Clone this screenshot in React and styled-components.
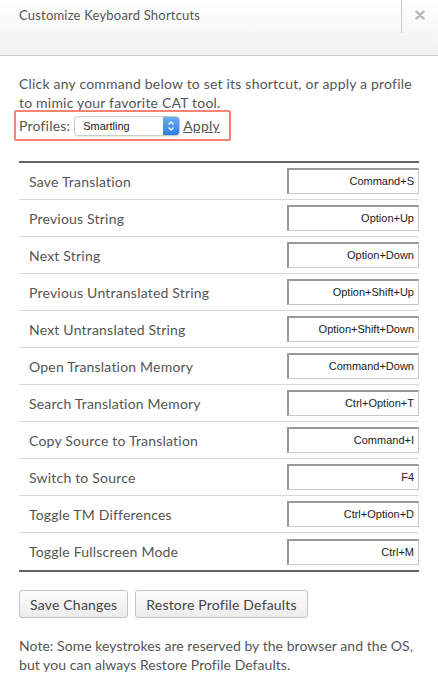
import React from 'react';
import styled, { createGlobalStyle } from 'styled-components';

const GlobalStyle = createGlobalStyle`
  html, body {
    margin: 0;
    padding: 0;
    background: #ffffff;
  }
  body {
    font-family: Lato, 'Liberation Sans', sans-serif;
    letter-spacing: 0.2px;
    color: #555;
  }
`;

const SHORTCUTS = [
  ['Save Translation', 'Command+S'],
  ['Previous String', 'Option+Up'],
  ['Next String', 'Option+Down'],
  ['Previous Untranslated String', 'Option+Shift+Up'],
  ['Next Untranslated String', 'Option+Shift+Down'],
  ['Open Translation Memory', 'Command+Down'],
  ['Search Translation Memory', 'Ctrl+Option+T'],
  ['Copy Source to Translation', 'Command+I'],
  ['Switch to Source', 'F4'],
  ['Toggle TM Differences', 'Ctrl+Option+D'],
  ['Toggle Fullscreen Mode', 'Ctrl+M'],
];

function App() {
  return (
    <>
      <GlobalStyle />
      <Dialog>
        <Header>
          <Title>Customize Keyboard Shortcuts</Title>
          <CloseButton>
            <svg width="10" height="10" viewBox="0 0 10 10">
              <path d="M1.5 1.5 L8.5 8.5 M8.5 1.5 L1.5 8.5" stroke="#b5b5b5" strokeWidth="2.4" strokeLinecap="round" />
            </svg>
          </CloseButton>
        </Header>

        <Body>
          <Intro>
            Click any command below to set its shortcut, or apply a profile
            to mimic your favorite CAT tool.
          </Intro>

          <ProfileBox>
            <ProfileLabel>Profiles:</ProfileLabel>
            <SelectBox>
              <SelectText>Smartling</SelectText>
              <SelectArrow>
                <svg width="8" height="12" viewBox="0 0 8 12">
                  <path d="M1.5 4.5 L4 2 L6.5 4.5 M1.5 7.5 L4 10 L6.5 7.5" stroke="#fff" strokeWidth="1.3" fill="none" />
                </svg>
              </SelectArrow>
            </SelectBox>
            <ApplyLink>Apply</ApplyLink>
          </ProfileBox>

          <ShortcutTable>
            {SHORTCUTS.map(([label, keys], i) => (
              <ShortcutRow key={label} $last={i === SHORTCUTS.length - 1}>
                <CommandName>{label}</CommandName>
                <KeyInput>{keys}</KeyInput>
              </ShortcutRow>
            ))}
          </ShortcutTable>

          <ButtonRow>
            <Button>Save Changes</Button>
            <Button>Restore Profile Defaults</Button>
          </ButtonRow>

          <Note>
            Note: Some keystrokes are reserved by the browser and the OS,
            but you can always Restore Profile Defaults.
          </Note>
        </Body>
      </Dialog>
    </>
  );
}

export default App;

const Dialog = styled.div`
  width: 438px;
  height: 698px;
  background: #fff;
  overflow: hidden;
`;

const Header = styled.div`
  height: 56px;
  display: flex;
  align-items: flex-start;
  justify-content: space-between;
  background: linear-gradient(to bottom, #ffffff 0%, #f1f1f1 100%);
  border-bottom: 1px solid #cfcfcf;
  box-sizing: border-box;
`;

const Title = styled.div`
  padding: 6px 0 0 19px;
  font-size: 13px;
  line-height: 18px;
  color: #555;
`;

const CloseButton = styled.div`
  width: 37px;
  height: 33px;
  border-left: 1px solid #c8c8c8;
  display: flex;
  align-items: center;
  justify-content: center;
  padding-bottom: 4px;
  box-sizing: border-box;
`;

const Body = styled.div`
  padding: 18px 19px 0 19px;
`;

const Intro = styled.p`
  margin: 0;
  font-size: 14px;
  line-height: 19px;
  color: #555;
`;

const ProfileBox = styled.div`
  display: flex;
  width: fit-content;
  align-items: center;
  margin: -2px 0 0 -5px;
  padding: 0 9px 0 3px;
  height: 31px;
  border: 2px solid #f58373;
  border-radius: 2px;
  box-sizing: border-box;
`;

const ProfileLabel = styled.span`
  font-size: 14px;
  color: #555;
  margin-right: 4px;
`;

const SelectBox = styled.div`
  display: flex;
  align-items: stretch;
  width: 106px;
  height: 20px;
  border: 1px solid #c9c9c9;
  border-radius: 4px;
  overflow: hidden;
  box-sizing: border-box;
  background: #fff;
  box-shadow: 0 1px 1px rgba(0, 0, 0, 0.08);
`;

const SelectText = styled.span`
  flex: 1;
  padding-left: 8px;
  font-family: 'Liberation Sans', Arial, sans-serif;
  letter-spacing: 0;
  font-size: 11px;
  line-height: 18px;
  color: #222;
`;

const SelectArrow = styled.span`
  width: 16px;
  display: flex;
  align-items: center;
  justify-content: center;
  background: linear-gradient(to bottom, #6aaef7, #2c7ee8);
`;

const ApplyLink = styled.a`
  margin-left: 3px;
  font-size: 14px;
  color: #555;
  text-decoration: underline;
  cursor: pointer;
`;

const ShortcutTable = styled.div`
  margin-top: 20px;
  border-top: 2px solid #666;
  border-bottom: 2px solid #666;
`;

const ShortcutRow = styled.div`
  display: flex;
  align-items: center;
  justify-content: space-between;
  height: 37px;
  box-sizing: border-box;
  border-bottom: ${(p) => (p.$last ? 'none' : '1px solid #d8d8d8')};
  padding-left: 10px;
`;

const CommandName = styled.span`
  font-size: 14px;
  color: #555;
`;

const KeyInput = styled.div`
  width: 132px;
  height: 26px;
  box-sizing: border-box;
  border: 1px solid #c8c8c8;
  border-top-color: #999;
  border-left-color: #999;
  border-top-width: 2px;
  border-left-width: 2px;
  padding-right: 4px;
  text-align: right;
  font-family: 'Liberation Sans', Arial, sans-serif;
  letter-spacing: 0;
  font-size: 11px;
  line-height: 22px;
  color: #222;
`;

const ButtonRow = styled.div`
  display: flex;
  gap: 7px;
  margin-top: 18px;
`;

const Button = styled.button`
  height: 28px;
  padding: 0 10px;
  font-family: Lato, 'Liberation Sans', sans-serif;
  letter-spacing: 0.2px;
  font-size: 14px;
  color: #444;
  background: linear-gradient(to bottom, #fbfbfb, #ececec);
  border: 1px solid #c4c4c4;
  border-radius: 3px;
`;

const Note = styled.p`
  margin: 18px 0 0 0;
  font-size: 14px;
  letter-spacing: 0.05px;
  line-height: 19px;
  color: #555;
`;
